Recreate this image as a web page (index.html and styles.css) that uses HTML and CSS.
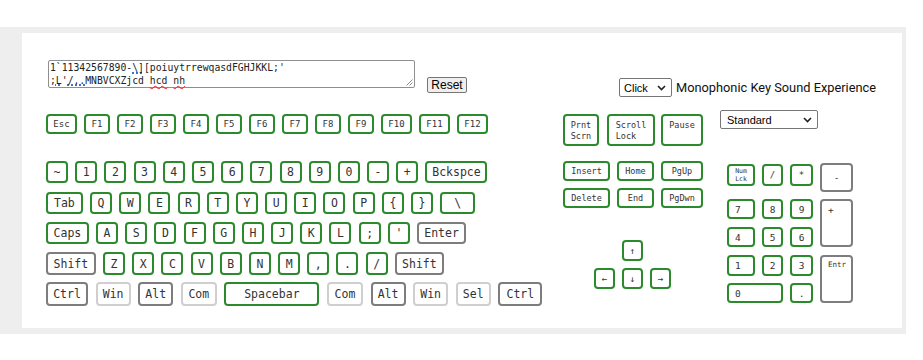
FILE: index.html
```html
<!DOCTYPE html>
<html>
<head>
<meta charset="utf-8">
<link rel="stylesheet" href="styles.css">
</head>
<body>
<div class="frame">
  <div class="panel">
    <div class="top">
      <div class="textarea">
        <div class="ta-line">1`11342567890-<span class="gram">\]</span>[poiuytrrewqasdFGHJKKL;'</div>
        <div class="ta-line"><span class="gram">;L</span>'<span class="gram">/..</span>MNBVCXZjcd <span class="spell">hcd</span> <span class="spell">nh</span></div>
        <svg class="grip" width="7" height="7" viewBox="0 0 7 7"><path d="M6.5 0.5 L0.5 6.5 M6.5 3.5 L3.5 6.5" stroke="#8a8a8a" stroke-width="1" fill="none"/></svg>
      </div>
      <button class="reset">Reset</button>
      <div class="sound">
        <div class="select sel-click"><span>Click</span><svg width="9" height="6" viewBox="0 0 9 6"><path d="M1 1 L4.5 4.5 L8 1" stroke="#222" stroke-width="1.6" fill="none"/></svg></div>
        <span class="sound-label">Monophonic Key Sound Experience</span>
      </div>
    </div>

    <div class="board">
      <div class="main">
        <div class="row frow">
          <div class="key fk k31">Esc</div>
          <div class="key fk k26">F1</div>
          <div class="key fk k26">F2</div>
          <div class="key fk k26">F3</div>
          <div class="key fk k26">F4</div>
          <div class="key fk k26">F5</div>
          <div class="key fk k26">F6</div>
          <div class="key fk k26">F7</div>
          <div class="key fk k26">F8</div>
          <div class="key fk k26">F9</div>
          <div class="key fk k31">F10</div>
          <div class="key fk k31">F11</div>
          <div class="key fk k31">F12</div>
        </div>
        <div class="row numrow">
          <div class="key k22">~</div>
          <div class="key k22">1</div>
          <div class="key k22">2</div>
          <div class="key k22">3</div>
          <div class="key k22">4</div>
          <div class="key k22">5</div>
          <div class="key k22">6</div>
          <div class="key k22">7</div>
          <div class="key k22">8</div>
          <div class="key k22">9</div>
          <div class="key k22">0</div>
          <div class="key k22">-</div>
          <div class="key k22">+</div>
          <div class="key k62">Bckspce</div>
        </div>
        <div class="row tabrow">
          <div class="key k-tab">Tab</div>
          <div class="key k22">Q</div>
          <div class="key k22">W</div>
          <div class="key k22">E</div>
          <div class="key k22">R</div>
          <div class="key k22">T</div>
          <div class="key k22">Y</div>
          <div class="key k22">U</div>
          <div class="key k22">I</div>
          <div class="key k22">O</div>
          <div class="key k22">P</div>
          <div class="key k22">{</div>
          <div class="key k22">}</div>
          <div class="key k35">\</div>
        </div>
        <div class="row capsrow">
          <div class="key k-caps">Caps</div>
          <div class="key k22">A</div>
          <div class="key k22">S</div>
          <div class="key k22">D</div>
          <div class="key k22">F</div>
          <div class="key k22">G</div>
          <div class="key k22">H</div>
          <div class="key k22">J</div>
          <div class="key k22">K</div>
          <div class="key k22">L</div>
          <div class="key k22">;</div>
          <div class="key k22">'</div>
          <div class="key dark k49">Enter</div>
        </div>
        <div class="row shiftrow">
          <div class="key dark k-lshift">Shift</div>
          <div class="key k22">Z</div>
          <div class="key k22">X</div>
          <div class="key k22">C</div>
          <div class="key k22">V</div>
          <div class="key k22">B</div>
          <div class="key k22">N</div>
          <div class="key k22">M</div>
          <div class="key k22">,</div>
          <div class="key k22">.</div>
          <div class="key k22">/</div>
          <div class="key dark k49">Shift</div>
        </div>
        <div class="row ctrlrow">
          <div class="key dark k42">Ctrl</div>
          <div class="key light k35">Win</div>
          <div class="key dark k35">Alt</div>
          <div class="key light k36">Com</div>
          <div class="key k95">Spacebar</div>
          <div class="key light k36">Com</div>
          <div class="key dark k35">Alt</div>
          <div class="key light k35">Win</div>
          <div class="key light k35">Sel</div>
          <div class="key dark k44">Ctrl</div>
        </div>
      </div>

      <div class="nav">
        <div class="row navtop">
          <div class="key nk tall k36"><span class="stack">Prnt<br>Scrn</span></div>
          <div class="key nk tall k48"><span class="stack">Scroll<br>Lock</span></div>
          <div class="key nk tall k42">Pause</div>
        </div>
        <div class="row navmid">
          <div class="key nk k47">Insert</div>
          <div class="key nk k37">Home</div>
          <div class="key nk k42">PgUp</div>
        </div>
        <div class="row navbot">
          <div class="key nk k47">Delete</div>
          <div class="key nk k37">End</div>
          <div class="key nk k42">PgDwn</div>
        </div>
        <div class="arrows-up">
          <div class="key ak">↑</div>
        </div>
        <div class="arrows">
          <div class="key ak">←</div>
          <div class="key ak">↓</div>
          <div class="key ak">→</div>
        </div>
      </div>

      <div class="numblock">
        <div class="select sel-std"><span>Standard</span><svg width="9" height="6" viewBox="0 0 9 6"><path d="M1 1 L4.5 4.5 L8 1" stroke="#222" stroke-width="1.6" fill="none"/></svg></div>
        <div class="numpad">
          <div class="key pk numlock"><span class="stack">Num<br>Lck</span></div>
          <div class="key pk np-slash">/</div>
          <div class="key pk np-star">*</div>
          <div class="key pk dark np-minus">-</div>
          <div class="key pk left np-7">7</div>
          <div class="key pk np-8">8</div>
          <div class="key pk np-9">9</div>
          <div class="key pk dark left np-plus">+</div>
          <div class="key pk left np-4">4</div>
          <div class="key pk np-5">5</div>
          <div class="key pk np-6">6</div>
          <div class="key pk left np-1">1</div>
          <div class="key pk np-2">2</div>
          <div class="key pk np-3">3</div>
          <div class="key pk dark left np-enter">Entr</div>
          <div class="key pk left np-0">0</div>
          <div class="key pk np-dot">.</div>
        </div>
      </div>
    </div>
  </div>
</div>
</body>
</html>
```

FILE: styles.css
```css
html, body {
  margin: 0;
  padding: 0;
  background: #ffffff;
}

.frame {
  margin-top: 27px;
  width: 880px;
  padding: 6px 4px 6px 22px;
  background: #eeeeee;
}

.panel {
  box-sizing: border-box;
  height: 295px;
  background: #ffffff;
  padding: 27px 0 0 24px;
}

/* top controls */
.top {
  display: flex;
  align-items: flex-start;
  height: 50px;
}

.textarea {
  position: relative;
  box-sizing: border-box;
  width: 367px;
  height: 28px;
  margin-left: 2px;
  border: 1px solid #8f8f8f;
  border-radius: 2px;
  padding: 1px 0 0 1px;
  font-family: "DejaVu Sans Mono", monospace;
  font-size: 9.75px;
  line-height: 12.5px;
  color: #222;
}

.ta-line {
  height: 12.5px;
  white-space: pre;
}

.gram {
  text-decoration: underline dotted #3b6fd0;
  text-decoration-thickness: 2px;
  text-underline-offset: 1px;
}

.spell {
  text-decoration: underline wavy #e02020;
  text-decoration-thickness: 1px;
  text-underline-offset: 1px;
}

.grip {
  position: absolute;
  right: 1px;
  bottom: 1px;
}

.reset {
  box-sizing: border-box;
  margin: 17px 0 0 12px;
  width: 40px;
  height: 16px;
  padding: 0;
  border: 1px solid #767676;
  border-radius: 2px;
  background: #efefef;
  font-family: "Liberation Sans", Arial, sans-serif;
  font-size: 12px;
  line-height: 14px;
  color: #000;
}

.sound {
  display: flex;
  align-items: center;
  margin: 18px 0 0 152px;
}

.select {
  box-sizing: border-box;
  display: flex;
  align-items: center;
  justify-content: space-between;
  height: 19px;
  border: 1px solid #767676;
  border-radius: 2px;
  background: #fff;
  font-family: "Liberation Sans", Arial, sans-serif;
  font-size: 11px;
  color: #000;
  padding: 0 5px 0 4px;
}

.sel-click {
  width: 53px;
}

.sel-std {
  width: 98px;
  padding-left: 6px;
}

.sound-label {
  margin-left: 4px;
  font-family: Roboto, "Liberation Sans", sans-serif;
  font-size: 12.8px;
  color: #111;
}

/* board */
.board {
  display: flex;
  align-items: flex-start;
}

.main {
  width: 496px;
  margin-top: 4px;
}

.row {
  display: flex;
  gap: 7.2px;
}

.key {
  box-sizing: border-box;
  flex: none;
  height: 22px;
  border: 2px solid #2b8a2b;
  border-radius: 4px;
  background: #fff;
  display: flex;
  align-items: center;
  justify-content: center;
  font-family: "DejaVu Sans Mono", monospace;
  font-size: 11.5px;
  color: #333;
  white-space: nowrap;
}

.key.dark {
  border-color: #7d7d7d;
}

.key.light {
  border-color: #cfcfcf;
}

.frow { gap: 7px; }
.frow .key { height: 20px; }
.fk { font-size: 9px; }

.numrow { margin-top: 27px; }
.tabrow { margin-top: 9px; }
.capsrow { margin-top: 8px; }
.shiftrow { margin-top: 8px; }
.shiftrow .key { height: 23px; }
.ctrlrow { margin-top: 7px; gap: 7.6px; }
.ctrlrow .key { height: 24px; }

.k22 { width: 22px; }
.k26 { width: 26px; }
.k31 { width: 31px; }
.k35 { width: 35px; }
.k36 { width: 36px; }
.k37 { width: 37px; }
.k42 { width: 42px; }
.k44 { width: 44px; }
.k47 { width: 47px; }
.k48 { width: 48px; }
.k49 { width: 49px; }
.k62 { width: 62px; }
.k95 { width: 95px; }
.k-tab { width: 36.8px; }
.k-caps { width: 42.8px; }
.k-lshift { width: 49.8px; }

/* navigation cluster */
.nav {
  width: 140px;
  margin: 4px 0 0 21px;
}

.navtop { gap: 0; justify-content: flex-start; }
.navtop .k36 { margin-right: 8px; }
.navtop .k48 { margin-right: 6px; }

.nk {
  height: 20px;
  font-size: 8.5px;
}

.nk.tall {
  height: 32px;
  align-items: flex-start;
  padding-top: 4px;
}

.stack {
  display: block;
  text-align: left;
  line-height: 11px;
}

.navmid { margin-top: 15px; gap: 7px; }
.navbot { margin-top: 7px; gap: 7px; }

.arrows-up {
  display: flex;
  justify-content: center;
  margin-top: 32px;
  padding-right: 1px;
}

.arrows {
  display: flex;
  justify-content: center;
  gap: 7px;
  margin-top: 7px;
  padding-right: 1px;
}

.ak {
  width: 21px;
  height: 21px;
  font-size: 9px;
}

/* numpad */
.numblock {
  margin-left: 17px;
}

.numpad {
  display: grid;
  grid-template-columns: 28px 21px 23px 33px;
  grid-template-rows: 22px 13px 20px 8px 20px 8px 21px 7px 20px;
  column-gap: 7px;
  margin: 35px 0 0 7px;
}

.pk {
  width: auto;
  height: auto;
  font-size: 9.5px;
}

.pk.left {
  justify-content: flex-start;
  padding-left: 6px;
}

.numlock { grid-row: 1; grid-column: 1; font-size: 6.5px; }
.numlock .stack { line-height: 8px; }
.np-slash { grid-row: 1; grid-column: 2; font-size: 9px; }
.np-star { grid-row: 1; grid-column: 3; font-size: 9px; }
.np-minus {
  grid-row: 1;
  grid-column: 4;
  height: 29px;
  margin-top: -1px;
  align-self: start;
}
.np-7 { grid-row: 3; grid-column: 1; }
.np-8 { grid-row: 3; grid-column: 2; }
.np-9 { grid-row: 3; grid-column: 3; }
.np-plus {
  grid-row: 3 / 6;
  grid-column: 4;
  align-items: flex-start;
  padding-top: 3px;
}
.np-4 { grid-row: 5; grid-column: 1; }
.np-5 { grid-row: 5; grid-column: 2; }
.np-6 { grid-row: 5; grid-column: 3; }
.np-1 { grid-row: 7; grid-column: 1; }
.np-2 { grid-row: 7; grid-column: 2; }
.np-3 { grid-row: 7; grid-column: 3; }
.np-enter {
  grid-row: 7 / 10;
  grid-column: 4;
  align-items: flex-start;
  padding-top: 3px;
  font-size: 7.5px;
}
.np-0 { grid-row: 9; grid-column: 1 / 3; }
.np-dot { grid-row: 9; grid-column: 3; }
```
